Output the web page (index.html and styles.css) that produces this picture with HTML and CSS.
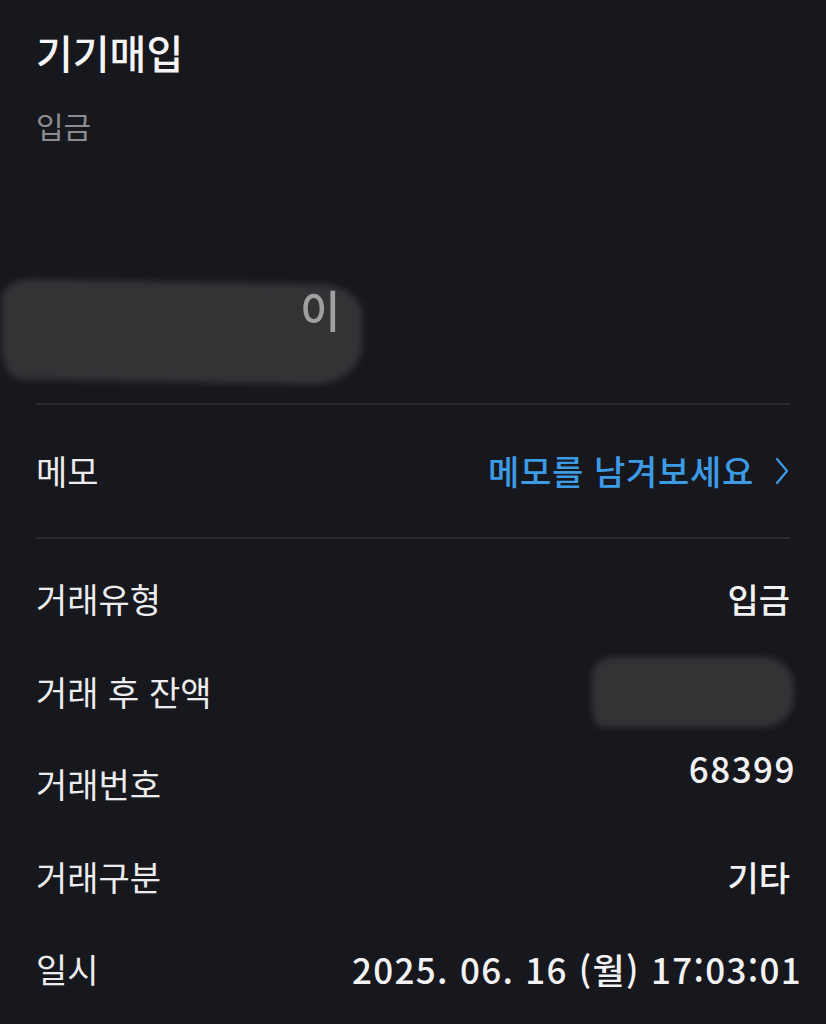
FILE: index.html
```html
<!DOCTYPE html>
<html lang="ko">
<head>
<meta charset="utf-8">
<link rel="stylesheet" href="styles.css">
</head>
<body>
<div class="page">
  <header class="head">
    <h1 class="title">기기매입</h1>
    <div class="sub">입금</div>
    <div class="amount">
      <div class="redact redact-big"></div>
      <span class="amount-frag">이</span>
    </div>
  </header>
  <div class="divider"></div>
  <div class="memo-row">
    <span class="label">메모</span>
    <span class="memo-link">메모를 남겨보세요
      <svg class="chev" width="16" height="30" viewBox="0 0 16 30"><path d="M3 3 L13 15 L3 27" fill="none" stroke="#3d9be6" stroke-width="2.2" stroke-linecap="round" stroke-linejoin="round"/></svg>
    </span>
  </div>
  <div class="divider"></div>
  <div class="details">
    <div class="row"><span class="label">거래유형</span><span class="value">입금</span></div>
    <div class="row"><span class="label">거래 후 잔액</span><span class="value"><span class="redact redact-small"></span></span></div>
    <div class="row row-top"><span class="label">거래번호</span><span class="value num">68399</span></div>
    <div class="row"><span class="label">거래구분</span><span class="value">기타</span></div>
    <div class="row"><span class="label">일시</span><span class="value date">2025. 06. 16 (월) 17:03:01</span></div>
  </div>
</div>
</body>
</html>
```
FILE: styles.css
```css
html, body {
  margin: 0;
  padding: 0;
  background: #17181d;
}
body {
  font-family: "Noto Sans CJK KR", "Noto Sans", sans-serif;
  color: #ececee;
  width: 826px;
  height: 1024px;
  overflow: hidden;
}
.page {
  padding: 0 36px;
}
.head {
  display: flex;
  flex-direction: column;
}
.title {
  margin: 24px 0 0 0;
  font-size: 40px;
  font-weight: 500;
  line-height: 56px;
  color: #f4f4f6;
}
.sub {
  margin-top: 27px;
  font-size: 30px;
  line-height: 36px;
  color: #8c8c91;
}
.amount {
  position: relative;
  height: 164px;
  margin: 96px 0 0 -36px;
}
.redact {
  display: block;
  background: #333336;
  filter: blur(3px);
}
.redact-big {
  position: absolute;
  left: 2px;
  top: 43px;
  width: 360px;
  height: 100px;
  border-radius: 30px 40px 50px 20px / 20px 30px 40px 30px;
  transform: skewY(1deg);
}
.amount-frag {
  position: absolute;
  left: 300px;
  top: 38px;
  font-size: 44px;
  font-weight: 500;
  color: #c4c4c6;
  opacity: 0.75;
}
.divider {
  height: 2px;
  background: #2a2b30;
}
.memo-row {
  display: flex;
  justify-content: space-between;
  align-items: center;
  height: 132px;
}
.label {
  font-size: 34px;
  line-height: 40px;
  color: #ececee;
}
.memo-link {
  display: flex;
  align-items: center;
  gap: 20px;
  font-size: 34px;
  line-height: 40px;
  letter-spacing: 0.7px;
  color: #3d9be6;
  font-weight: 500;
}
.chev {
  display: block;
}
.details {
  display: flex;
  flex-direction: column;
  padding-top: 14px;
}
.row {
  display: flex;
  justify-content: space-between;
  align-items: center;
  height: 92.5px;
}
.row-top .value {
  margin-top: -32px;
  margin-right: -6px;
}
.value {
  font-size: 34px;
  line-height: 40px;
  font-weight: 500;
  color: #f2f2f4;
}
.num {
  font-size: 35px;
  letter-spacing: 1.5px;
}
.redact-small {
  width: 202px;
  height: 70px;
  margin-right: -4px;
  border-radius: 20px 30px 30px 10px / 20px 30px 30px 20px;
}
.date {
  font-size: 35px;
  letter-spacing: 1.3px;
  margin-right: -12px;
}
```
